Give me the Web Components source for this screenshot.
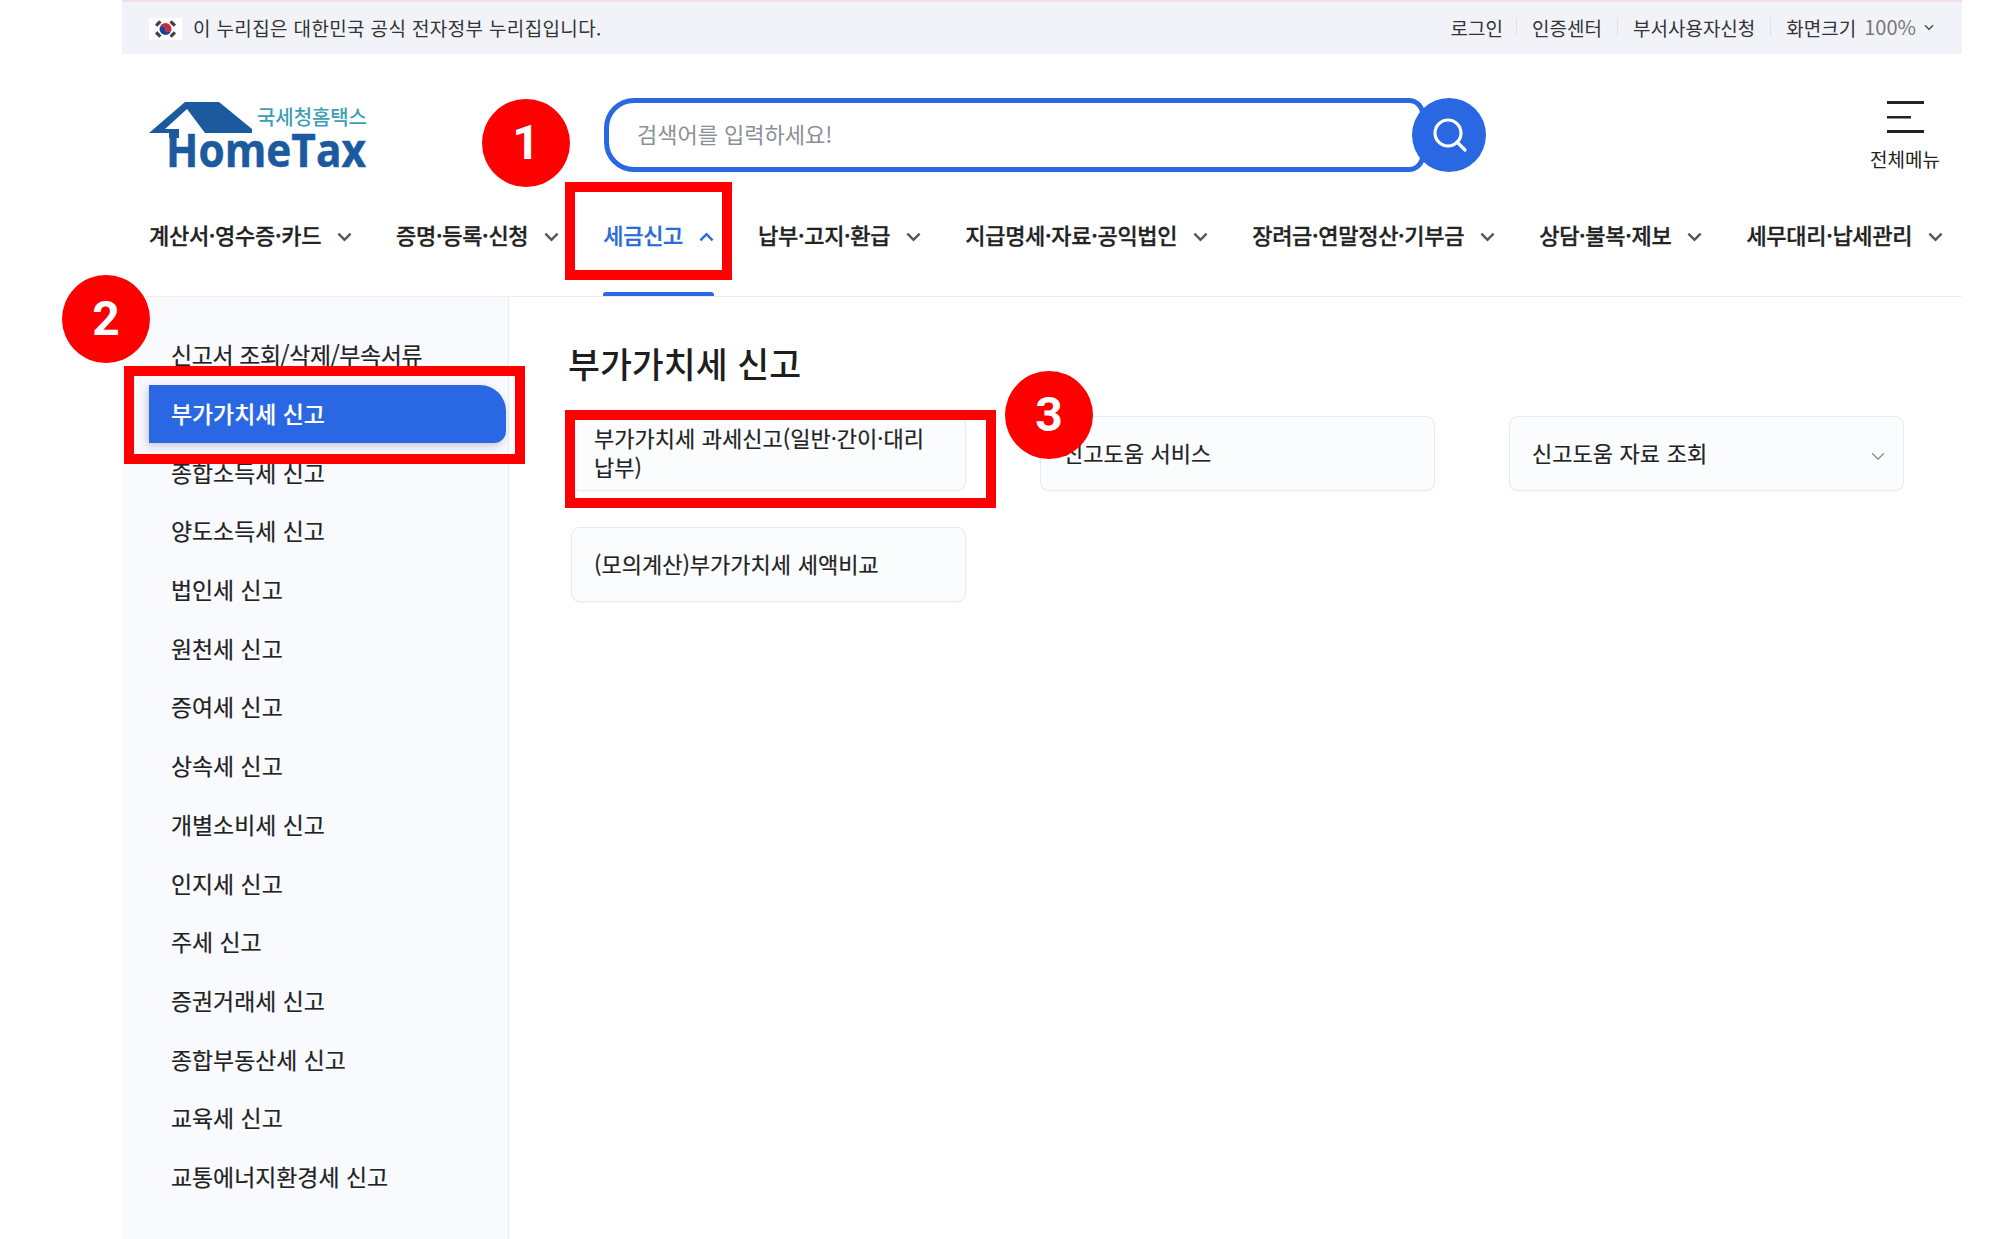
<!DOCTYPE html>
<html lang="ko"><head><meta charset="utf-8"><title>HomeTax</title>
<style>
html,body{margin:0;padding:0;background:#fff}
body{font-family:"Noto Sans CJK KR","Noto Sans",sans-serif;color:#222}
</style></head>
<body>
<ht-page>
  <gov-bar></gov-bar>
  <site-header></site-header>
  <main-nav>
    <nav-item>계산서·영수증·카드</nav-item>
    <nav-item>증명·등록·신청</nav-item>
    <nav-item active>세금신고</nav-item>
    <nav-item>납부·고지·환급</nav-item>
    <nav-item>지급명세·자료·공익법인</nav-item>
    <nav-item>장려금·연말정산·기부금</nav-item>
    <nav-item>상담·불복·제보</nav-item>
    <nav-item>세무대리·납세관리</nav-item>
  </main-nav>
  <work-area>
    <side-menu>
      <side-item style="letter-spacing:-.35px">신고서 조회/삭제/부속서류</side-item>
      <side-item active>부가가치세 신고</side-item>
      <side-item>종합소득세 신고</side-item>
      <side-item>양도소득세 신고</side-item>
      <side-item>법인세 신고</side-item>
      <side-item>원천세 신고</side-item>
      <side-item>증여세 신고</side-item>
      <side-item>상속세 신고</side-item>
      <side-item>개별소비세 신고</side-item>
      <side-item>인지세 신고</side-item>
      <side-item>주세 신고</side-item>
      <side-item>증권거래세 신고</side-item>
      <side-item>종합부동산세 신고</side-item>
      <side-item>교육세 신고</side-item>
      <side-item>교통에너지환경세 신고</side-item>
    </side-menu>
    <task-panel heading="부가가치세 신고">
      <task-card>부가가치세 과세신고(일반·간이·대리 납부)</task-card>
      <task-card>신고도움 서비스</task-card>
      <task-card more>신고도움 자료 조회</task-card>
      <task-card>(모의계산)부가가치세 세액비교</task-card>
    </task-panel>
  </work-area>
  <note-box style="left:565px;top:182px;width:167px;height:98px"></note-box>
  <note-box style="left:124px;top:366px;width:401px;height:98px"></note-box>
  <note-box style="left:565px;top:410px;width:431px;height:98px"></note-box>
  <note-num style="left:482px;top:99px">1</note-num>
  <note-num style="left:62px;top:275px">2</note-num>
  <note-num style="left:1005px;top:371px">3</note-num>
</ht-page>
<script>
function def(name, html){
  customElements.define(name, class extends HTMLElement{
    constructor(){super();this.attachShadow({mode:'open'});}
    connectedCallback(){
      this.shadowRoot.innerHTML = typeof html==='function'?html(this):html;
    }
  });
}
const chev=(c,up,w=15,h=10,sw=2.6)=>`<svg width="${w}" height="${h}" viewBox="0 0 16 10" fill="none" stroke="${c}" stroke-width="${sw}"><path d="${up?'M1.5 8.5 8 2l6.5 6.5':'M1.5 1.5 8 8l6.5-6.5'}"/></svg>`;

def('ht-page',`<style>:host{display:block;position:relative;width:2000px;height:1239px;overflow:hidden;background:#fff;padding:0 38px 0 122px;box-sizing:border-box}</style><slot></slot>`);

def('gov-bar',`<style>
:host{display:flex;align-items:center;height:52px;border-top:2px solid #f6dfe4;background:#f1f3f9;padding:0 28px 0 27px;font-size:19px;color:#333}
.flag{display:block;margin-right:11px;margin-top:2px}
.msg{flex:1;line-height:1;letter-spacing:.36px;margin-top:-2px}
.links{display:flex;align-items:center;margin-top:-2px}
.links span{line-height:1}
i{display:block;width:1px;height:18px;background:#dfe2ea;margin:0 15px}
i.first{margin-left:13px}
b{font-weight:400;color:#777;margin-left:8px;font-size:20px;line-height:1}
.c{margin-left:8px;display:flex}
</style>
<svg class="flag" width="33" height="22" viewBox="0 0 33 22"><rect width="33" height="22" fill="#fff"/>
<path d="M16.5 5a6 6 0 0 1 6 6 3 3 0 0 1-6 0 3 3 0 0 0-6 0 6 6 0 0 1 6-6z" fill="#d3243c"/>
<path d="M16.500 17a6 6 0 0 1-6-6 3 3 0 0 1 6 0 3 3 0 0 0 6 0 6 6 0 0 1-6 6z" fill="#23408f"/>
<g stroke="#444" stroke-width="3.400"><path d="M7 5.500 9.500 7.500M9 3.500 11.500 5.500"/><path d="M21.500 5.500 24 3.500M23.500 7.500 26 5.500"/><path d="M7 16.500 9.500 14.500M9 18.500 11.500 16.500"/><path d="M21.500 16.500 24 18.500M23.500 14.500 26 16.500"/></g></svg>
<span class="msg">이 누리집은 대한민국 공식 전자정부 누리집입니다.</span>
<div class="links"><span>로그인</span><i class="first"></i><span>인증센터</span><i></i><span>부서사용자신청</span><i></i><span>화면크기</span><b>100%</b><span class="c">${chev('#555',false,10,7,2.4)}</span></div>`);

def('site-logo',`<style>:host{display:block;width:240px;height:74px}svg{display:block;overflow:visible}
text{font-family:"Open Sans","Noto Sans",sans-serif}</style>
<svg width="240" height="90" viewBox="0 0 240 90">
<path fill="#1c5aa0" d="M36 4H70L103 31V35H56L38 11 16 31H30V40H20V35H0z"/>
<text x="17" y="69" font-size="46.500" font-weight="700" fill="#1c5aa0" stroke="#1c5aa0" stroke-width=".5" textLength="200" lengthAdjust="spacingAndGlyphs">HomeTax</text>
<text x="108" y="26.500" font-size="20" font-weight="500" fill="#3e9fb4" style="font-family:'Noto Sans CJK KR',sans-serif" textLength="110">국세청홈택스</text>
</svg>`);

def('search-box',`<style>:host{display:flex;align-items:center;width:882px;height:74px}
.f{box-sizing:border-box;width:821px;height:74px;border:5px solid #2a67e2;border-radius:30px 16px 16px 30px;padding:0 0 4px 28px;display:flex;align-items:center;font-size:22px;color:#8b8f96;background:#fff}
.b{width:74px;height:74px;border-radius:50%;background:#2a67e2;margin-left:-13px;display:flex;align-items:center;justify-content:center;flex:none}
svg{display:block}</style>
<div class="f"><span>검색어를 입력하세요!</span></div>
<div class="b"><svg width="38" height="38" viewBox="0 0 38 38" fill="none" stroke="#fff" stroke-width="3.200" stroke-linecap="round"><circle cx="18" cy="17" r="13"/><path d="M27 26l8 8"/></svg></div>`);

def('all-menu',`<style>:host{display:flex;flex-direction:column;align-items:center;width:80px;font-size:19px;color:#222;line-height:24px}
svg{display:block;margin:3px 0 14px}</style>
<svg width="37" height="32" viewBox="0 0 37 32" fill="#222"><rect y="0" width="37" height="3"/><rect y="15" width="24" height="2.500"/><rect y="29" width="37" height="3"/></svg>
<span>전체메뉴</span>`);

def('site-header',`<style>:host{display:flex;align-items:flex-start;height:154px;padding:44px 17px 0 27px;box-sizing:border-box}
search-box{margin-left:215px}
all-menu{margin-left:auto}</style>
<site-logo></site-logo><search-box></search-box><all-menu></all-menu>`);

def('main-nav',`<style>:host{display:flex;height:89px;box-sizing:border-box;border-bottom:1px solid #eceef2;padding:12px 0 0 27px;gap:44px;align-items:flex-start}</style><slot></slot>`);

def('nav-item',h=>{const on=h.hasAttribute('active');return `<style>
:host{display:block;position:relative;height:76px;white-space:nowrap;font-size:22px;font-weight:500;letter-spacing:-.3px;-webkit-text-stroke:.3px currentColor;line-height:28px;color:${on?'#2a6bd6':'#222'};flex:none}
.r{display:flex;align-items:center;gap:16px}
u{position:absolute;left:0;right:0;bottom:0;height:4px;border-radius:3px 3px 0 0;background:#2a67e2}
svg{display:block;margin-top:5px}</style>
<div class="r"><span><slot></slot></span>${chev(on?'#2a6bd6':'#555',on)}</div>${on?'<u></u>':''}`});

def('work-area',`<style>:host{display:grid;grid-template-columns:387px 1fr;height:942px}</style><slot></slot>`);

def('side-menu',`<style>:host{display:block;box-sizing:border-box;background:#f9fafd;border-right:1px solid #e9ebf0;padding:29px 2px 0 27px}</style><slot></slot>`);

def('side-item',h=>{const on=h.hasAttribute('active');return `<style>
:host{display:flex;align-items:center;box-sizing:border-box;height:58.700px;padding:0 0 2px 22px;font-size:22.900px;font-weight:${on?500:400};-webkit-text-stroke:.2px currentColor;color:${on?'#fff':'#222'};white-space:nowrap;
${on?'background:#2a67e2;border-radius:0 26px 12px 0;box-shadow:-2px 3px 8px rgba(40,60,120,.25);':''}}
</style><slot></slot>`});

def('task-panel',h=>`<style>:host{display:block;padding:43px 0 0 59px}
h2{margin:0 0 30px;font-size:34.700px;font-weight:500;line-height:46px;color:#1e1e1e}
.g{display:grid;grid-template-columns:repeat(3,395px);column-gap:74px;row-gap:36px;grid-auto-rows:75px;margin-left:3px}
</style><h2>${h.getAttribute('heading')}</h2><div class="g"><slot></slot></div>`);

def('task-card',h=>`<style>:host{display:flex;align-items:center;justify-content:space-between;box-sizing:border-box;border:1px solid #e8eaef;border-radius:9px;background:#fbfcfe;box-shadow:0 1px 2px rgba(0,0,0,.04);padding:0 22px 3px;font-size:22px;-webkit-text-stroke:.2px currentColor;word-spacing:.5px;line-height:29px;color:#222;word-break:keep-all}
svg{flex:none;margin:9px -4px 0 0}</style><span><slot></slot></span>${h.hasAttribute('more')?chev('#888',false,14,9,1.500):''}`);

def('note-box',`<style>:host{display:block;position:absolute;box-sizing:border-box;border:10px solid #f00;z-index:5}</style>`);
def('note-num',`<style>:host{display:flex;position:absolute;width:88px;height:88px;border-radius:50%;background:#f00;color:#fff;align-items:center;justify-content:center;font-family:Roboto,"Liberation Sans",sans-serif;font-size:48px;font-weight:700;line-height:1;z-index:6}</style><slot></slot>`);
</script>
</body></html>
